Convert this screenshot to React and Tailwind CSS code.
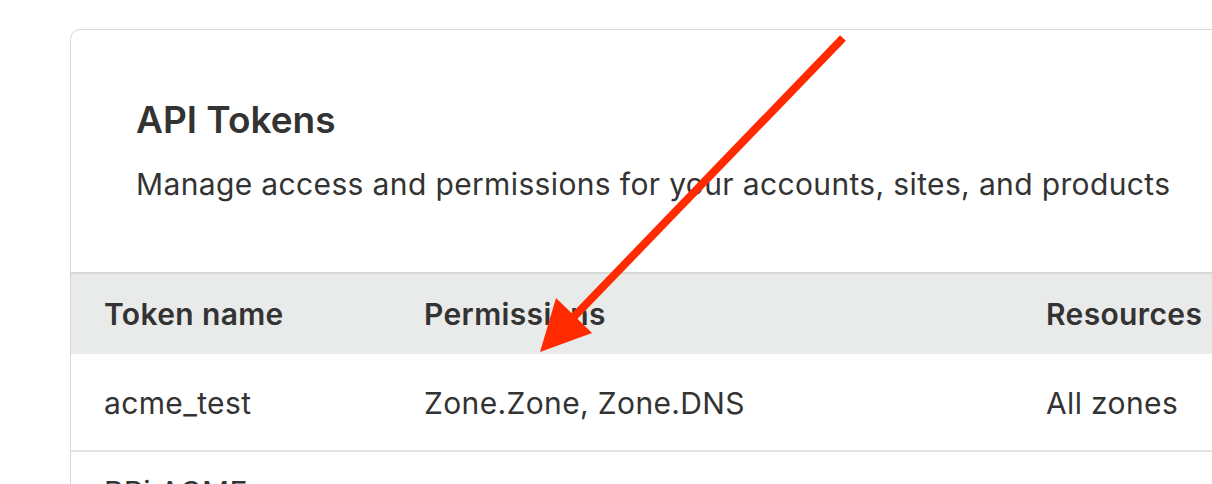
import React from 'react'

// Token list card with an annotation arrow on top
const Arrow = () => (
  <svg className="absolute left-0 top-0 pointer-events-none" width="1212" height="484" viewBox="0 0 1212 484">
    <line x1="843" y1="38" x2="566" y2="325" stroke="#ff2a00" strokeWidth="8" />
    <polygon points="540,352 556,298 592,333" fill="#ff2a00" />
  </svg>
)

export default function App() {
  return (
    <div
      className="relative w-[1212px] h-[484px] overflow-hidden bg-white text-[#333]"
      style={{ fontFamily: 'Inter, "Noto Sans", sans-serif' }}
    >
      <div className="ml-[70px] mt-[29px] w-[1300px] rounded-tl-[10px] border border-[#d6d6d6]">
        <div className="pl-[65px] pt-[67px] pb-[70px]">
          <h1 className="text-[37px] font-semibold leading-[45px]">API Tokens</h1>
          <p className="mt-[24px] text-[30px] leading-[36px] tracking-[0.012em]">
            Manage access and permissions for your accounts, sites, and products
          </p>
        </div>
        <table className="w-full border-collapse text-left text-[30px] tracking-[0.012em]">
          <thead>
            <tr className="h-[81px] bg-[#e9ebea] border-t-2 border-[#d8d8d8]">
              <th className="w-[353px] pl-[33px] font-semibold">Token name</th>
              <th className="w-[622px] font-semibold">Permissions</th>
              <th className="font-semibold">Resources</th>
            </tr>
          </thead>
          <tbody>
            <tr className="h-[97px] border-b-2 border-[#e4e4e4]">
              <td className="pl-[33px] pt-[2px]">acme_test</td>
              <td className="pt-[2px]">Zone.Zone, Zone.DNS</td>
              <td className="pt-[2px]">All zones</td>
            </tr>
            <tr className="h-[97px] align-top">
              <td className="pl-[33px] pt-[22px] leading-[36px]">RPi ACME</td>
              <td></td>
              <td></td>
            </tr>
          </tbody>
        </table>
      </div>
      <Arrow />
    </div>
  )
}
